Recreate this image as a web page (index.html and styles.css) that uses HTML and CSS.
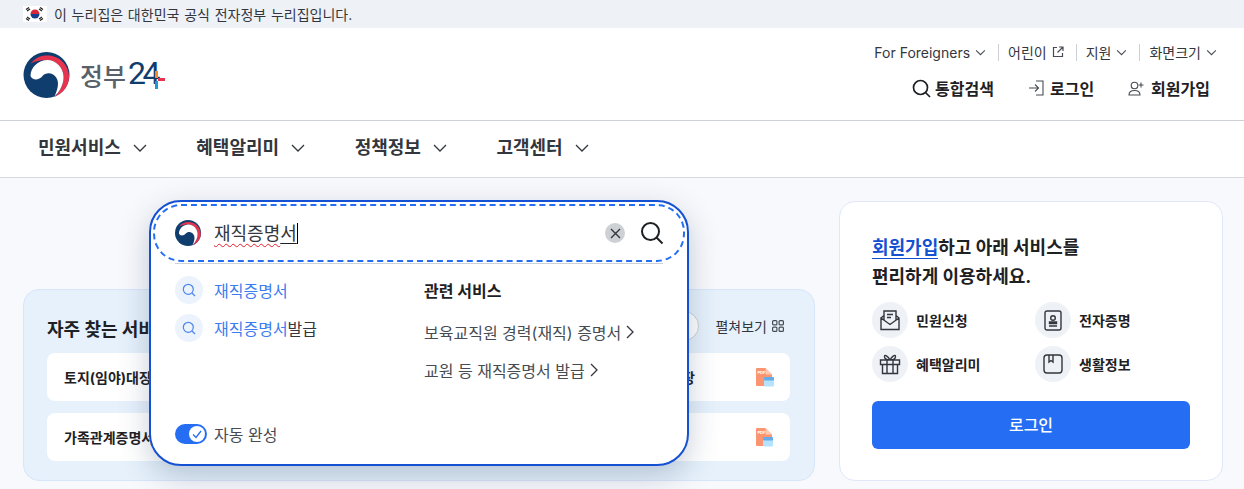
FILE: index.html
```html
<!DOCTYPE html>
<html lang="ko">
<head>
    <meta charset="UTF-8">
    <meta name="viewport" content="width=device-width, initial-scale=1.0">
    <title>정부24</title>
    <link rel="stylesheet" href="styles.css">
</head>
<body>
    <div class="gov-bar">
        <svg class="flag" width="24" height="16" viewBox="0 0 24 16">
            <rect width="24" height="16" fill="#fff"/>
            <path d="M7.500 8a4.500 4.500 0 0 1 9 0z" fill="#d8263c"/>
            <path d="M7.500 8a4.500 4.500 0 0 0 9 0z" fill="#173d8c"/>
            <path d="M3 3.500l3-2M4 5l3-2M17 1.500l3 2M16 3l3 2M3 12.500l3 2M4 11l3 2M20 12.500l-3 2M19 11l-3 2" stroke="#222" stroke-width="1.300"/>
        </svg>
        <span>이 누리집은 대한민국 공식 전자정부 누리집입니다.</span>
    </div>

    <header class="header">
        <a class="logo">
            <svg width="47" height="46" viewBox="0 0 46 46">
                <circle cx="23" cy="23" r="23" fill="#0f3d6e"/>
                <path d="M7 12C11 6 17 3.500 24 3.500 36 3.500 45 13 45.500 24 46 33 40 41 31 45 37 39 40.500 31 40 24 39.500 15 32 8 24 8 17 8 11 9 7 12z" fill="#e8334f"/>
                <path d="M7 24C7 15 15 8 24 8c8 0 15.500 7 16 16 .5 7-3 15-9 20.500 3-6.500 5-13.500 2-18.500-3-6-11-6-14-2-3 4-10 5-12 0z" fill="#fff"/>
            </svg>
            <span class="logo-name">정부</span><span class="logo-num">24</span>
            <svg class="logo-plus" width="10" height="18" viewBox="0 0 10 18">
                <rect width="3" height="7" fill="#f08a2c"/>
                <rect x="3" y="7" width="7" height="3" fill="#e8334f"/>
                <rect y="10" width="3" height="8" fill="#1b9ad6"/>
            </svg>
        </a>
        <div class="header-right">
            <ul class="util">
                <li>For Foreigners <svg class="chev-sm" viewBox="0 0 12 8"><path d="M1 1.500l5 5 5-5"/></svg></li>
                <li>어린이 <svg class="ext" viewBox="0 0 12 12"><path d="M5 1.500H1.500v9h9V7M7 1h4v4M11 1L5.500 6.500"/></svg></li>
                <li>지원 <svg class="chev-sm" viewBox="0 0 12 8"><path d="M1 1.500l5 5 5-5"/></svg></li>
                <li>화면크기 <svg class="chev-sm" viewBox="0 0 12 8"><path d="M1 1.500l5 5 5-5"/></svg></li>
            </ul>
            <div class="actions">
                <a><svg width="19" height="19" viewBox="0 0 19 19" class="ico-line"><circle cx="8.500" cy="8.500" r="7"/><path d="M13.500 13.500l4.500 4.500"/></svg>통합검색</a>
                <a class="wide"><svg width="16" height="16" viewBox="0 0 16 16" class="ico-thin"><path d="M8 1h7v14H8M1 8h9M7 4.500L10.500 8 7 11.500"/></svg>로그인</a>
                <a class="wide"><svg width="17" height="15" viewBox="0 0 17 15" class="ico-thin"><circle cx="6.500" cy="4.500" r="3.300"/><path d="M1 14c0-3 2.500-4.500 5.500-4.500S12 11 12 14zM13 1.500v5M10.500 4h5"/></svg>회원가입</a>
            </div>
        </div>
    </header>

    <nav class="gnb">
        <a>민원서비스 <svg class="chev" viewBox="0 0 14 8"><path d="M1 1l6 6 6-6"/></svg></a>
        <a>혜택알리미 <svg class="chev" viewBox="0 0 14 8"><path d="M1 1l6 6 6-6"/></svg></a>
        <a>정책정보 <svg class="chev" viewBox="0 0 14 8"><path d="M1 1l6 6 6-6"/></svg></a>
        <a>고객센터 <svg class="chev" viewBox="0 0 14 8"><path d="M1 1l6 6 6-6"/></svg></a>
    </nav>

    <main class="main">
        <section class="favorites">
            <div class="fav-head">
                <h2>자주 찾는 서비스</h2>
                <div class="fav-tools">
                    <span class="fav-round"></span>
                    <span class="fav-more">펼쳐보기
                        <svg width="12" height="12" viewBox="0 0 12 12" class="ico-grid"><rect x=".6" y=".6" width="4.300" height="4.300" rx="1"/><rect x="7.100" y=".6" width="4.300" height="4.300" rx="1"/><rect x=".6" y="7.100" width="4.300" height="4.300" rx="1"/><rect x="7.100" y="7.100" width="4.300" height="4.300" rx="1"/></svg>
                    </span>
                </div>
            </div>
            <div class="fav-row">
                <span>토지(임야)대장</span>
                <span class="fav-far">건축물대장</span>
                <svg class="pdf" width="20" height="20" viewBox="0 0 20 20"><path d="M2 1h8.500L17 7.500V19H2a1 1 0 0 1-1-1V2a1 1 0 0 1 1-1z" fill="#fb9470"/><path d="M10.500 1L17 7.500h-6.500z" fill="#fdc9b3"/><text x="2.500" y="7" class="pdf-txt">PDF</text><rect x="9" y="10" width="10" height="9.500" rx="1.500" fill="#b5e2fc"/><rect x="9" y="10" width="10" height="3.500" rx="1" fill="#64ace8"/></svg>
            </div>
            <div class="fav-row">
                <span>가족관계증명서</span>
                <svg class="pdf" width="20" height="20" viewBox="0 0 20 20"><path d="M2 1h8.500L17 7.500V19H2a1 1 0 0 1-1-1V2a1 1 0 0 1 1-1z" fill="#fb9470"/><path d="M10.500 1L17 7.500h-6.500z" fill="#fdc9b3"/><text x="2.500" y="7" class="pdf-txt">PDF</text><rect x="8" y="10" width="10" height="9.500" rx="1.500" fill="#b5e2fc"/><rect x="8" y="10" width="10" height="3.500" rx="1" fill="#64ace8"/></svg>
            </div>
        </section>

        <aside class="login-card">
            <p class="login-title"><a>회원가입</a>하고 아래 서비스를<br>편리하게 이용하세요.</p>
            <ul class="perks">
                <li><span class="perk-ico"><svg width="22" height="22" viewBox="0 0 22 22" class="ico-dark"><path d="M2 9v11.500h18V9l-3-2.500M5 6.500L2 9l9 6.500L20 9M5 11V2h12v9M8 5.500h6M8 8.500h4"/></svg></span>민원신청</li>
                <li><span class="perk-ico"><svg width="18" height="21" viewBox="0 0 18 21" class="ico-dark"><rect x="1" y="1" width="16" height="19" rx="2"/><circle cx="9" cy="8" r="2.300"/><path d="M5.500 13.500h7v-1.500h-7zM5 16h8"/></svg></span>전자증명</li>
                <li><span class="perk-ico"><svg width="22" height="22" viewBox="0 0 22 22" class="ico-dark"><path d="M1.500 7h19v4.500h-19zM3.500 11.500V20.500h15V11.500M8 7v13.500M14 7v13.500M11 7C9 3 5.500 1 5.500 3.500 5.500 6 8 7 11 7zM11 7c2-4 5.500-6 5.500-3.500C16.500 6 14 7 11 7z"/></svg></span>혜택알리미</li>
                <li><span class="perk-ico"><svg width="20" height="20" viewBox="0 0 20 20" class="ico-dark"><rect x="1" y="1" width="18" height="18" rx="3"/><path d="M6 1v7l2-1.500L10 8V1"/></svg></span>생활정보</li>
            </ul>
            <button class="login-btn">로그인</button>
        </aside>

        <div class="search-pop">
            <div class="search-box">
                <svg width="26" height="26" viewBox="0 0 46 46">
                    <circle cx="23" cy="23" r="23" fill="#0f3d6e"/>
                    <path d="M7 12C11 6 17 3.500 24 3.500 36 3.500 45 13 45.500 24 46 33 40 41 31 45 37 39 40.500 31 40 24 39.500 15 32 8 24 8 17 8 11 9 7 12z" fill="#e8334f"/>
                    <path d="M7 24C7 15 15 8 24 8c8 0 15.500 7 16 16 .5 7-3 15-9 20.500 3-6.500 5-13.500 2-18.500-3-6-11-6-14-2-3 4-10 5-12 0z" fill="#fff"/>
                </svg>
                <span class="search-input"><span class="typo">재직증명</span><span class="composing">서</span></span>
                <span class="clear-btn"><svg width="11" height="11" viewBox="0 0 11 11"><path d="M1 1l9 9M10 1l-9 9"/></svg></span>
                <svg class="search-go" width="24" height="24" viewBox="0 0 24 24"><circle cx="10.500" cy="10.500" r="8.500"/><path d="M16.500 16.500l6 6"/></svg>
            </div>
            <div class="search-line"></div>
            <div class="search-body">
                <ul class="suggest">
                    <li><span class="sug-ico"><svg width="14" height="14" viewBox="0 0 14 14"><circle cx="6.300" cy="6.300" r="5"/><path d="M10 10l3 3"/></svg></span><span><em>재직증명서</em></span></li>
                    <li><span class="sug-ico"><svg width="14" height="14" viewBox="0 0 14 14"><circle cx="6.300" cy="6.300" r="5"/><path d="M10 10l3 3"/></svg></span><span><em>재직증명서</em>발급</span></li>
                </ul>
                <div class="related">
                    <h3>관련 서비스</h3>
                    <a>보육교직원 경력(재직) 증명서 <svg class="go" viewBox="0 0 8 14"><path d="M1 1l6 6-6 6"/></svg></a>
                    <a>교원 등 재직증명서 발급 <svg class="go" viewBox="0 0 8 14"><path d="M1 1l6 6-6 6"/></svg></a>
                </div>
            </div>
            <label class="auto">
                <span class="toggle"><span class="knob"><svg width="10" height="9" viewBox="0 0 10 9"><path d="M1 4.500l3 3L9 1"/></svg></span></span>
                자동 완성
            </label>
        </div>
    </main>
</body>
</html>
```

FILE: styles.css
```css
* {
    margin: 0;
    padding: 0;
    box-sizing: border-box;
    font-family: Inter, 'Noto Sans CJK KR', sans-serif;
}

html, body {
    height: 100vh;
    overflow: hidden;
}

body {
    background: #f8f9fc;
    color: #1e2124;
}

ul {
    list-style: none;
}

svg {
    flex: none;
}

.gov-bar {
    height: 28px;
    background: #eef1f6;
    display: flex;
    align-items: center;
    gap: 7px;
    padding-left: 23px;
    font-size: 14px;
    word-spacing: 0.8px;
    color: #33363d;
}

.header {
    height: 93px;
    background: #fff;
    border-bottom: 1px solid #cdd1d5;
    display: flex;
    justify-content: space-between;
    padding: 0 27px 0 23px;
}

.logo {
    display: flex;
    align-items: center;
    height: 92px;
    padding-top: 1px;
    position: relative;
}

.logo-name {
    margin-left: 10px;
    font-size: 25px;
    font-weight: 500;
    color: #58616a;
}

.logo-num {
    margin: 0 0 3px 2px;
    font-family: Roboto, sans-serif;
    font-size: 32px;
    color: #0f3d6e;
    letter-spacing: -3.5px;
}

.logo-plus {
    position: absolute;
    left: 132px;
    top: 43px;
}

.header-right {
    display: flex;
    flex-direction: column;
    align-items: flex-end;
    padding-top: 14px;
}

.util {
    display: flex;
    align-items: center;
    font-size: 14px;
    color: #33363d;
    height: 20px;
}

.util li {
    display: flex;
    align-items: center;
    gap: 5px;
    padding-left: 9px;
    margin-left: 12px;
    height: 17px;
    border-left: 1px solid #cdd1d5;
}

.util li:first-child {
    border-left: 0;
    margin: 0 0 0 -1px;
    padding: 0;
}

.chev-sm {
    width: 11px;
    height: 7px;
    fill: none;
    stroke: #464c53;
    stroke-width: 1.200;
}

.ext {
    width: 12px;
    height: 12px;
    fill: none;
    stroke: #464c53;
    stroke-width: 1.200;
}

.actions {
    display: flex;
    gap: 34px;
    margin-top: 14px;
    padding-right: 7px;
    font-size: 16px;
    font-weight: 700;
    color: #1e2124;
}

.actions a {
    display: flex;
    align-items: center;
    gap: 4px;
}

.actions a.wide {
    gap: 6px;
}

.ico-line {
    fill: none;
    stroke: #1e2124;
    stroke-width: 1.700;
}

.ico-thin {
    fill: none;
    stroke: #464c53;
    stroke-width: 1.100;
}

.gnb {
    height: 57px;
    background: #fff;
    border-bottom: 1px solid #d6d9dd;
    display: flex;
    align-items: center;
    gap: 49.5px;
    padding: 0 0 6px 38px;
    font-size: 18px;
    font-weight: 700;
    color: #33363d;
}

.gnb a {
    display: flex;
    align-items: center;
    gap: 12px;
}

.chev {
    width: 14px;
    height: 8px;
    margin-top: 3px;
    fill: none;
    stroke: #33363d;
    stroke-width: 1.300;
}

.main {
    position: relative;
    height: 311px;
    display: flex;
    justify-content: space-between;
    align-items: flex-end;
    padding: 0 21px 8px 23px;
}

.favorites {
    width: 792px;
    height: 192px;
    background: #e6f1fb;
    border: 1px solid #d8e6fb;
    border-radius: 16px;
    padding: 24px 24px 0 23px;
}

.fav-head {
    display: flex;
    justify-content: space-between;
    align-items: center;
    height: 27px;
    margin-bottom: 12px;
}

.fav-head h2 {
    font-size: 18px;
    font-weight: 700;
}

.fav-tools {
    display: flex;
    align-items: center;
    gap: 16px;
    padding-right: 6px;
    margin-top: -4px;
}

.fav-round {
    width: 30px;
    height: 30px;
    border-radius: 50%;
    background: #fff;
    border: 1px solid #cdd1d5;
}

.fav-more {
    display: flex;
    align-items: center;
    gap: 5px;
    font-size: 14px;
    color: #33363d;
}

.ico-grid {
    fill: none;
    stroke: #464c53;
    stroke-width: 1.200;
}

.fav-row {
    height: 48px;
    background: #fff;
    border-radius: 8px;
    margin-bottom: 12px;
    padding: 0 15px 0 17px;
    display: flex;
    align-items: center;
    font-size: 14px;
    font-weight: 700;
}

.fav-far {
    margin-left: auto;
    margin-right: 60px;
}

.pdf {
    margin-left: auto;
}

.fav-far + .pdf {
    margin-left: 0;
}

.pdf-txt {
    font-size: 4px;
    font-weight: 700;
    fill: #fff;
}

.login-card {
    width: 384px;
    height: 280px;
    background: #fff;
    border: 1px solid #dfe7f8;
    border-radius: 16px;
    padding: 31px 32px 0;
}

.login-title {
    font-size: 18px;
    font-weight: 700;
    line-height: 29px;
    height: 60px;
}

.login-title a {
    color: #1450d2;
    border-bottom: 1px solid #1450d2;
}

.perks {
    display: grid;
    grid-template-columns: 163px 1fr;
    row-gap: 8px;
    margin-top: 9px;
    font-size: 14px;
    font-weight: 700;
}

.perks li {
    display: flex;
    align-items: center;
    gap: 8px;
}

.perk-ico {
    width: 36px;
    height: 36px;
    border-radius: 50%;
    background: #eef1f6;
    display: flex;
    align-items: center;
    justify-content: center;
}

.ico-dark {
    fill: none;
    stroke: #33363d;
    stroke-width: 1.400;
}

.login-btn {
    display: block;
    width: 318px;
    height: 48px;
    margin-top: 19px;
    padding-bottom: 3px;
    background: #256ef4;
    color: #fff;
    border: none;
    border-radius: 6px;
    font-size: 16px;
    font-weight: 500;
}

.search-pop {
    position: absolute;
    left: 149px;
    top: 22px;
    width: 540px;
    height: 266px;
    background: #fff;
    border: 2px solid #1450d2;
    border-radius: 32px;
    box-shadow: 0 10px 30px rgba(30, 60, 100, 0.25);
    padding: 2px;
}

.search-box {
    height: 58px;
    border: 2px dashed #256ef4;
    border-radius: 28px;
    display: flex;
    align-items: center;
    padding: 0 19px 0 20px;
}

.search-input {
    flex: 1;
    margin: 0 0 3px 13px;
    font-size: 18px;
    color: #33363d;
}

.typo {
    text-decoration: underline wavy #e0202c 1px;
    text-underline-offset: 3px;
}

.composing {
    text-decoration: underline #1e2124 1px;
    text-underline-offset: 3px;
    border-right: 1px solid #000;
}

.clear-btn {
    width: 20px;
    height: 20px;
    border-radius: 50%;
    background: #cdd1d5;
    display: flex;
    align-items: center;
    justify-content: center;
    margin-right: 15px;
}

.clear-btn svg {
    fill: none;
    stroke: #33363d;
    stroke-width: 1.400;
}

.search-go {
    fill: none;
    stroke: #1e2124;
    stroke-width: 2;
}

.search-line {
    height: 1px;
    margin: 1px 22px 0;
    background: #cdd1d5;
}

.search-body {
    display: flex;
    padding: 12px 0 0 22px;
    height: 158px;
}

.suggest {
    width: 249px;
    display: flex;
    flex-direction: column;
    gap: 10px;
    font-size: 16px;
    color: #33363d;
}

.suggest li {
    display: flex;
    align-items: center;
    gap: 11px;
}

.sug-ico {
    width: 28px;
    height: 28px;
    border-radius: 50%;
    background: #edf3fd;
    display: flex;
    align-items: center;
    justify-content: center;
}

.sug-ico svg {
    fill: none;
    stroke: #4a86ee;
    stroke-width: 1.200;
}

.suggest em {
    font-style: normal;
    color: #3b7cf0;
}

.related {
    display: flex;
    flex-direction: column;
    padding-top: 1px;
    font-size: 16px;
    color: #464c53;
}

.related h3 {
    font-size: 16px;
    font-weight: 700;
    color: #1e2124;
    line-height: 28px;
    margin-bottom: 15px;
}

.related a {
    display: flex;
    align-items: center;
    gap: 5px;
    height: 24px;
    margin-bottom: 14px;
}

.go {
    width: 8px;
    height: 14px;
    fill: none;
    stroke: #33363d;
    stroke-width: 1.300;
}

.auto {
    display: flex;
    align-items: center;
    gap: 7px;
    margin-left: 22px;
    font-size: 16px;
    color: #464c53;
}

.toggle {
    width: 32px;
    height: 20px;
    border-radius: 10px;
    background: #256ef4;
    display: flex;
    align-items: center;
    justify-content: flex-end;
    padding-right: 2px;
}

.knob {
    width: 16px;
    height: 16px;
    border-radius: 50%;
    background: #fff;
    display: flex;
    align-items: center;
    justify-content: center;
}

.knob svg {
    fill: none;
    stroke: #256ef4;
    stroke-width: 1.300;
}
```
